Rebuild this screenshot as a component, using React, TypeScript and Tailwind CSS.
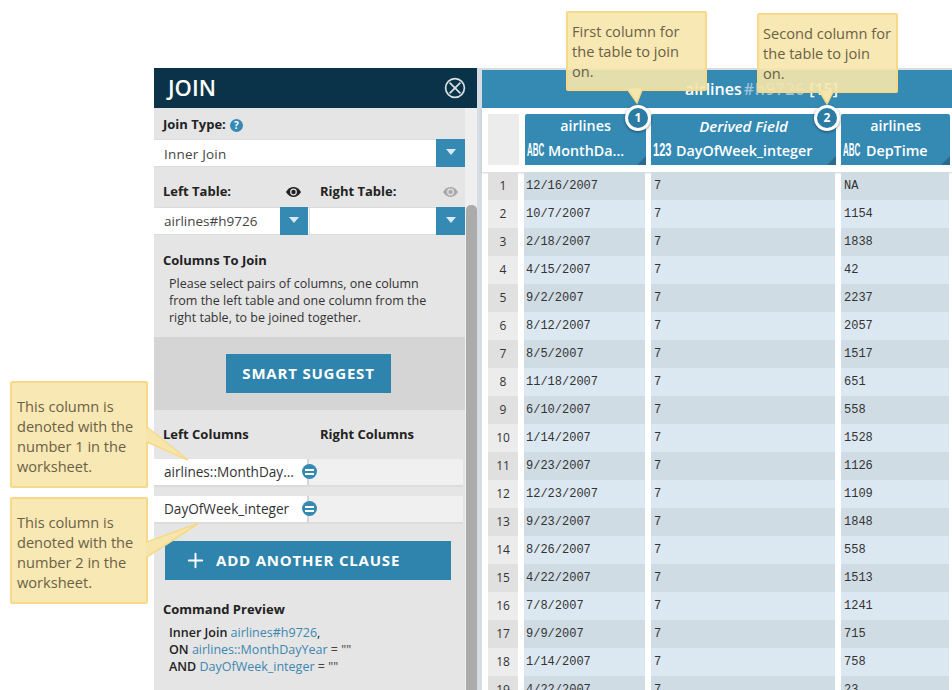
import { Plus } from "lucide-react";

const rows = [
  ["12/16/2007", "NA"],
  ["10/7/2007", "1154"],
  ["2/18/2007", "1838"],
  ["4/15/2007", "42"],
  ["9/2/2007", "2237"],
  ["8/12/2007", "2057"],
  ["8/5/2007", "1517"],
  ["11/18/2007", "651"],
  ["6/10/2007", "558"],
  ["1/14/2007", "1528"],
  ["9/23/2007", "1126"],
  ["12/23/2007", "1109"],
  ["9/23/2007", "1848"],
  ["8/26/2007", "558"],
  ["4/22/2007", "1513"],
  ["7/8/2007", "1241"],
  ["9/9/2007", "715"],
  ["1/14/2007", "758"],
  ["4/22/2007", "23"],
];

function Caret({ className }: { className: string }) {
  return (
    <div className={`-my-px flex items-center justify-center bg-[#358ab4] ${className}`}>
      <div className="mb-[2px] h-0 w-0 border-x-[5px] border-t-[6px] border-x-transparent border-t-[#dbe9f1]" />
    </div>
  );
}

function EyeIcon({ color }: { color: string }) {
  return (
    <svg width="15" height="10" viewBox="0 0 15 10" className="mb-[4px] shrink-0">
      <path d="M0 5C2 1.8 4.6 0 7.5 0S13 1.8 15 5C13 8.2 10.400 10 7.500 10S2 8.200 0 5Z" fill={color} />
      <circle cx="7.500" cy="5" r="3.400" fill="#e5e5e5" />
      <circle cx="7.500" cy="5" r="2.200" fill={color} />
    </svg>
  );
}

function MinusDot() {
  return (
    <span className="absolute right-[-10px] top-[5px] flex h-[15px] w-[15px] flex-col items-center justify-center gap-[2px] rounded-full bg-[#358ab4]">
      <span className="h-[2px] w-[9px] bg-white" />
      <span className="h-[2px] w-[9px] bg-white" />
    </span>
  );
}

function ClauseRow({ label, className }: { label: string; className: string }) {
  return (
    <div className={`flex h-[28px] w-[309px] border-b-2 border-[#dcdcdc] text-[13.6px] text-[#333] ${className}`}>
      <div className="relative flex w-[155px] items-center border-r-2 border-[#d5d5d5] bg-white pl-[10px]">
        {label}
        <MinusDot />
      </div>
      <div className="flex-1 bg-[#f0f0f0]" />
    </div>
  );
}

function HeaderCell({ title, name, type, italic, typeClass, scaleClass, className }: { title: string; name: string; type: string; italic?: boolean; typeClass: string; scaleClass: string; className: string }) {
  return (
    <div className={`relative flex h-[51px] flex-col rounded-t-[2px] bg-[#358ab4] text-white ${className}`}>
      <div className={`pt-[2px] text-center font-semibold leading-[20px] ${italic ? "text-[15px] italic" : "text-[14.300px]"}`}>{title}</div>
      <div className="mt-[4px] flex items-center text-[14.300px] font-semibold leading-[20px]">
        <span className={`shrink-0 ${typeClass}`}>
          <span className={`ml-[2px] inline-block origin-left text-[19px] font-bold leading-[20px] [font-family:'Liberation_Sans',sans-serif] ${scaleClass}`}>{type}</span>
        </span>
        <span className="whitespace-nowrap">{name}</span>
      </div>
      <div className="absolute bottom-0 right-0 h-0 w-0 border-b-[9px] border-l-[9px] border-b-[#2b6b8c] border-l-transparent" />
    </div>
  );
}

function Callout({ lines, className }: { lines: string[]; className: string }) {
  return (
    <div className={`absolute rounded-[2px] border-2 border-[#f7d98a] bg-[#f7e6ab]/90 text-[14.600px] leading-[20px] text-[#6a6147] ${className}`}>
      {lines.map((l) => (
        <div key={l} className="whitespace-nowrap">{l}</div>
      ))}
    </div>
  );
}

function Badge({ n, className }: { n: number; className: string }) {
  return (
    <div className={`absolute flex h-[26px] w-[26px] items-center justify-center rounded-full border-[3px] border-white bg-[#2b7ba3] text-[12px] font-bold text-white shadow-[0_1px_3px_rgba(0,0,0,0.45)] ${className}`}>
      {n}
    </div>
  );
}

export default function App() {
  return (
    <div className="relative flex h-[690px] w-[952px] overflow-hidden bg-white pl-[154px] pt-[68px] [font-family:'Open_Sans',sans-serif]">
      {/* join panel */}
      <div className="flex w-[323px] shrink-0 flex-col">
        <div className="flex h-[40px] items-center justify-between bg-[#0a3349] pl-[14px] pr-[11px] text-white">
          <span className="pb-[2px] text-[22px] font-semibold leading-none">JOIN</span>
          <svg width="22" height="22" viewBox="0 0 22 22" fill="none" stroke="#d8e0e4" strokeWidth="1.7">
            <circle cx="11" cy="11" r="9.400" />
            <path d="M5.600 5.600 16.400 16.400M16.400 5.600 5.600 16.400" />
          </svg>
        </div>
        <div className="flex min-h-0 flex-1">
          <div className="w-[311px] shrink-0 bg-[#e5e5e5] text-[#222]">
            <div className="flex h-[31px] items-center gap-[4px] pl-[9px] pt-[3px] text-[13px] font-bold">
              Join Type:
              <span className="flex h-[13px] w-[13px] items-center justify-center rounded-full bg-[#358ab4] text-[10px] text-white">?</span>
            </div>
            <div className="flex h-[28px] border-y border-[#dcdcdc] bg-white">
              <div className="flex flex-1 items-center pl-[10px] pt-[2px] text-[13.500px] tracking-[0.2px] text-[#444]">Inner Join</div>
              <Caret className="w-[29px]" />
            </div>
            <div className="flex h-[40px] items-end pb-[6px] text-[13px] font-bold">
              <span className="w-[132px] pl-[9px]">Left Table:</span>
              <EyeIcon color="#222222" />
              <span className="ml-[19px] w-[123px]">Right Table:</span>
              <EyeIcon color="#aaaaaa" />
            </div>
            <div className="flex h-[28px] border-y border-[#dcdcdc] bg-white text-[13.500px] text-[#444]">
              <div className="flex w-[126px] items-center pl-[10px]">airlines#h9726</div>
              <Caret className="w-[28px]" />
              <div className="ml-px flex-1 border-l border-[#dcdcdc]" />
              <Caret className="w-[29px]" />
            </div>
            <div className="pl-[9px] pt-[15px] text-[13px] font-bold leading-[20px]">Columns To Join</div>
            <div className="pl-[15px] pt-[5px] text-[12.500px] leading-[17px] text-[#333]">
              <div>Please select pairs of columns, one column</div>
              <div>from the left table and one column from the</div>
              <div>right table, to be joined together.</div>
            </div>
            <div className="mt-[11px] flex h-[73px] items-center bg-[#d5d5d5] pl-[72px]">
              <div className="flex h-[39px] w-[165px] items-center justify-center bg-[#2f84ad] text-[15px] font-bold tracking-[0.8px] text-white">
                SMART SUGGEST
              </div>
            </div>
            <div className="flex h-[49px] items-center text-[13px] font-bold">
              <span className="w-[166px] pl-[9px]">Left Columns</span>
              <span>Right Columns</span>
            </div>
            <ClauseRow label="airlines::MonthDay..." className="" />
            <ClauseRow label="DayOfWeek_integer" className="mt-[9px]" />
            <div className="ml-[11px] mt-[17px] flex h-[39px] w-[286px] items-center bg-[#2f84ad] pl-[19px] text-[15px] font-bold tracking-[0.8px] text-white">
              <Plus size={23} strokeWidth={2} className="mr-[9px] shrink-0" />
              ADD ANOTHER CLAUSE
            </div>
            <div className="pl-[9px] pt-[19px] text-[13px] font-bold leading-[20px]">Command Preview</div>
            <div className="pl-[15px] pt-[5px] text-[12.500px] font-semibold leading-[17px]">
              <div>Inner Join <span className="font-normal text-[#3c87b0]">airlines#h9726</span><span className="font-normal">,</span></div>
              <div>ON <span className="font-normal text-[#3c87b0]">airlines::MonthDayYear</span><span className="font-normal text-[#444]"> = ""</span></div>
              <div>AND <span className="font-normal text-[#3c87b0]">DayOfWeek_integer</span><span className="font-normal text-[#444]"> = ""</span></div>
            </div>
          </div>
          {/* scrollbar */}
          <div className="flex w-[12px] flex-col bg-[#efefef] pl-px pt-[97px]">
            <div className="flex-1 rounded-t-[5px] bg-[#ababab]" />
          </div>
        </div>
      </div>

      {/* worksheet */}
      <div className="flex w-[475px] shrink-0 flex-col border-l-[5px] border-t-2 border-[#d5dce2]">
        <div className="flex h-[38px] shrink-0 items-center bg-[#358ab4] pl-[203px] text-[16px] font-semibold leading-none text-white">
          airlines<span className="ml-[2px] tracking-[0.7px] text-[#9cc5da]">#h9726</span>&nbsp;[15]
        </div>
        <div className="flex h-[64px] shrink-0 gap-[5px] pl-[6px] pt-[6px] shadow-[0_1px_2px_rgba(0,0,0,0.18)]">
          <div className="mr-px h-[51px] w-[31px] bg-[#ececec]" />
          <HeaderCell title="airlines" name="MonthDa..." type="ABC" typeClass="w-[23px]" scaleClass="scale-x-[0.42]" className="w-[121px]" />
          <HeaderCell title="Derived Field" name="DayOfWeek_integer" type="123" typeClass="w-[25px]" scaleClass="scale-x-[0.58]" italic className="w-[185px]" />
          <HeaderCell title="airlines" name="DepTime" type="ABC" typeClass="w-[25px]" scaleClass="scale-x-[0.42]" className="w-[109px]" />
        </div>
        <div className="flex flex-col pl-[6px] font-['Liberation_Mono',monospace] text-[12px] text-[#333]">
          {rows.map(([date, dep], i) => {
            const odd = i % 2 === 0;
            return (
              <div key={i} className="flex h-[28px] shrink-0 gap-[6px] leading-[28px]">
                <div className={`w-[30px] text-center font-['Open_Sans',sans-serif] ${odd ? "bg-[#e0e0e0]" : "bg-[#ececec]"}`}>{i + 1}</div>
                <div className={`w-[121px] pl-[2px] ${odd ? "bg-[#d0dce4]" : "bg-[#dce8f1]"}`}>{date}</div>
                <div className={`w-[184px] pl-[3px] ${odd ? "bg-[#d0dce4]" : "bg-[#dce8f1]"}`}>7</div>
                <div className={`w-[108px] pl-[3px] ${odd ? "bg-[#d0dce4]" : "bg-[#dce8f1]"}`}>{dep}</div>
              </div>
            );
          })}
        </div>
      </div>

      {/* annotations */}
      <Callout lines={["First column for", "the table to join", "on."]} className="left-[566px] top-[11px] h-[80px] w-[141px] pl-[4px] pt-[8px]" />
      <Callout lines={["Second column for", "the table to join", "on."]} className="left-[757px] top-[13px] h-[80px] w-[141px] pl-[4px] pt-[8px]" />
      <Callout lines={["This column is", "denoted with the", "number 1 in the", "worksheet."]} className="left-[10px] top-[381px] h-[107px] w-[138px] pl-[5px] pt-[13px]" />
      <Callout lines={["This column is", "denoted with the", "number 2 in the", "worksheet."]} className="left-[10px] top-[497px] h-[107px] w-[138px] pl-[5px] pt-[13px]" />
      <svg className="absolute left-0 top-0" width="952" height="690" fill="none">
        <path d="M628 90 L637 103 L642 90" fill="#f7e6ab" stroke="#f7d98a" strokeWidth="1.500" />
        <path d="M820 92 L827 104 L833 92" fill="#f7e6ab" stroke="#f7d98a" strokeWidth="1.500" />
        <path d="M147 427 L188 460 L147 442" fill="#f7e6ab" stroke="#f7d98a" strokeWidth="1.500" />
        <path d="M147 542 L199 523 L147 557" fill="#f7e6ab" stroke="#f7d98a" strokeWidth="1.500" />
        <path d="M629 90H641M821 92H832M147 428V441M147 543V556" stroke="#f7e6ab" strokeWidth="3" />
      </svg>
      <Badge n={1} className="left-[625px] top-[105px]" />
      <Badge n={2} className="left-[814px] top-[105px]" />
    </div>
  );
}
